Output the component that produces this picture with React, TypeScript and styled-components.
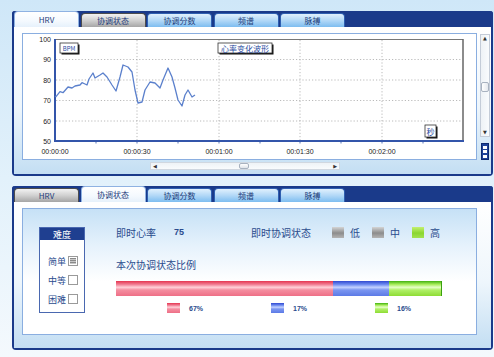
import React from "react";
import styled, { createGlobalStyle } from "styled-components";

const NAVY = "#1a3a8a";
const TEXT = "#2a4b8d";

const Global = createGlobalStyle`
  html, body { margin: 0; padding: 0; }
  body {
    width: 494px;
    height: 357px;
    overflow: hidden;
    background: linear-gradient(180deg, #cfe7f8 0%, #e2f1fb 50%, #f4f9fd 100%);
    font-family: "Noto Sans CJK SC", "Liberation Sans", sans-serif;
  }
`;

const Page = styled.div`
  display: flex;
  flex-direction: column;
  gap: 10px;
  padding: 11px 1px 0 12px;
`;

const Panel = styled.div`
  width: 481px;
  box-sizing: border-box;
  border: 2px solid ${NAVY};
  border-top: none;
  border-radius: 3px 3px 4px 4px;
  display: flex;
  flex-direction: column;
`;

const TabBar = styled.div`
  height: 16px;
  background: ${NAVY};
  display: flex;
  align-items: flex-end;
  gap: 1.5px;
  margin: 0 -2px;
  padding-left: 2px;
  border-radius: 3px 3px 0 0;
`;

type TabKind = "active" | "blue" | "gray";

const Tab = styled.div<{ $kind: TabKind }>`
  width: 65px;
  box-sizing: border-box;
  height: ${(p) => (p.$kind === "active" ? 16 : 14)}px;
  display: flex;
  align-items: center;
  justify-content: center;
  font-size: 8px;
  color: #1d3c7a;
  border-radius: 4px 4px 0 0;
  border: 1px solid
    ${(p) => (p.$kind === "active" ? "#8fb2e2" : p.$kind === "gray" ? "#4d4d4d" : "#2f5fb0")};
  border-bottom: none;
  background: ${(p) =>
    p.$kind === "active"
      ? "linear-gradient(180deg, #ffffff 0%, #f4f9fe 60%, #e6f1fb 100%)"
      : p.$kind === "gray"
      ? "linear-gradient(180deg, #f2f2f2 0%, #d0d0d0 50%, #a6a6a6 100%)"
      : "linear-gradient(180deg, #e0f0fd 0%, #b2d8f7 50%, #7dbdf0 100%)"};
`;

const TopBody = styled.div`
  display: grid;
  grid-template-columns: 455px 11px;
  grid-template-rows: 127px 8px;
  column-gap: 2px;
  row-gap: 2px;
  padding: 6px 0 4px 8px;
  background: linear-gradient(180deg, #ffffff 0%, #eef6fc 55%, #c3def3 100%);
`;

const BottomBody = styled.div`
  display: flex;
  padding: 6px 0 13px 8px;
  background: linear-gradient(180deg, #ffffff 0%, #eef6fc 55%, #c3def3 100%);
`;

const InnerBox = styled.div`
  box-sizing: border-box;
  height: 127px;
  width: 455px;
  flex: none;
  border: 1px solid #8aaee0;
  background: #ffffff;
`;

const StateBox = styled(InnerBox)`
  display: flex;
  align-items: flex-start;
  padding: 18px 0 0 16px;
  background: linear-gradient(180deg, #c6e1f6 0%, #e6f2fc 30%, #ffffff 58%);
`;

const ScrollCol = styled.div`
  display: flex;
  flex-direction: column;
  gap: 6px;
  padding-top: 1px;
`;

const VTrack = styled.div`
  margin-left: 1px;
  width: 10px;
  height: 103px;
  box-sizing: border-box;
  border: 1px solid #c4ccd8;
  background: linear-gradient(90deg, #eef2f6, #f9fbfd);
  display: flex;
  flex-direction: column;
  align-items: center;
`;

const Arrow = styled.span`
  font-size: 5px;
  line-height: 7px;
  height: 7px;
  color: #333;
  font-family: "DejaVu Sans", sans-serif;
`;

const VThumb = styled.div<{ $offset: number }>`
  margin-top: ${(p) => p.$offset}px;
  width: 8px;
  height: 10px;
  box-sizing: border-box;
  border: 1px solid #a8b2c0;
  border-radius: 2px;
  background: linear-gradient(90deg, #ffffff, #e4e8ee);
`;

const VSpacer = styled.div`
  flex: 1;
`;

const DotsButton = styled.div`
  margin-left: 2px;
  width: 8px;
  height: 17px;
  box-sizing: border-box;
  background: #1f4399;
  border: 1px solid #0e2a70;
  display: flex;
  flex-direction: column;
  align-items: center;
  justify-content: space-evenly;
`;

const Dot = styled.div`
  width: 4px;
  height: 3px;
  background: #ffffff;
`;

const HScrollRow = styled.div`
  padding-left: 128px;
`;

const HTrack = styled.div`
  width: 190px;
  height: 8px;
  box-sizing: border-box;
  border: 1px solid #d0d7e0;
  background: linear-gradient(180deg, #eef2f6, #f9fbfd);
  display: flex;
  align-items: center;
  padding: 0 2px;
`;

const HThumb = styled.div<{ $offset: number }>`
  margin-left: ${(p) => p.$offset}px;
  width: 10px;
  height: 6px;
  box-sizing: border-box;
  border: 1px solid #a8b2c0;
  border-radius: 2px;
  background: linear-gradient(180deg, #ffffff, #e0e4ea);
`;

const HArrow = styled.span`
  font-size: 5px;
  color: #333;
  font-family: "DejaVu Sans", sans-serif;
`;

/* ---------- Difficulty box ---------- */

const Difficulty = styled.div`
  flex: none;
  width: 46px;
  height: 86px;
  box-sizing: border-box;
  border: 1px solid #4a68b0;
  background: #ffffff;
  display: flex;
  flex-direction: column;
`;

const DiffHeader = styled.div`
  height: 12px;
  background: #1f3f90;
  color: #ffffff;
  font-size: 9px;
  display: flex;
  align-items: center;
  justify-content: center;
`;

const DiffList = styled.div`
  display: flex;
  flex-direction: column;
  gap: 7px;
  padding: 15px 6px 0 0;
  align-items: flex-end;
`;

const DiffItem = styled.div`
  display: flex;
  align-items: center;
  gap: 2px;
  height: 12px;
  font-size: 9px;
  color: ${TEXT};
`;

const Check = styled.div<{ $checked?: boolean }>`
  width: 10px;
  height: 10px;
  box-sizing: border-box;
  border: 1px solid #9a9a9a;
  background: #ffffff;
  display: flex;
  align-items: center;
  justify-content: center;
  &::after {
    content: "";
    display: ${(p) => (p.$checked ? "block" : "none")};
    width: 6px;
    height: 6px;
    background: repeating-linear-gradient(180deg, #8a8a8a 0 1px, #c8c8c8 1px 2px);
  }
`;

/* ---------- Main state column ---------- */

const Main = styled.div`
  flex: none;
  margin-left: 31px;
  display: flex;
  flex-direction: column;
`;

const Row = styled.div`
  display: flex;
  align-items: center;
  height: 10px;
  font-size: 10px;
  color: ${TEXT};
  white-space: nowrap;
`;

const Cell = styled.span<{ $w: number }>`
  width: ${(p) => p.$w}px;
  flex: none;
`;

const Value = styled.span`
  width: 77px;
  flex: none;
  font-family: "Liberation Sans", sans-serif;
  font-size: 9px;
  font-weight: bold;
`;

const StateItem = styled.div`
  display: flex;
  align-items: center;
  gap: 6px;
  width: 40px;
  flex: none;
`;

type Tone = "gray" | "green" | "red" | "blue";

const toneBg: Record<Tone, string> = {
  gray: "linear-gradient(180deg, #d4d4d4 0%, #8c8c8c 55%, #b4b4b4 100%)",
  green: "linear-gradient(180deg, #c4f070 0%, #8ad630 55%, #a2e250 100%)",
  red: "linear-gradient(180deg, #e5344f 0%, #f07a90 22%, #ffd0d8 42%, #f48ea0 60%, #ee6f86 100%)",
  blue: "linear-gradient(180deg, #3048d0 0%, #6a88ee 22%, #c4d2ff 42%, #7b96f0 60%, #5c7ae6 100%)",
};

const greenBar =
  "linear-gradient(180deg, #40b010 0%, #a6ec58 22%, #e6ffc8 42%, #b0f068 60%, #8edc34 100%)";

const Swatch = styled.div<{ $tone: Tone }>`
  width: 12px;
  height: 11px;
  flex: none;
  background: ${(p) => toneBg[p.$tone]};
`;

const SectionTitle = styled(Row)`
  margin-top: 22px;
`;

const Bar = styled.div`
  margin-top: 12px;
  width: 326px;
  height: 15px;
  display: flex;
  box-sizing: border-box;
`;

const Segment = styled.div<{ $tone: "red" | "blue" | "green" }>`
  height: 100%;
  background: ${(p) => (p.$tone === "green" ? greenBar : toneBg[p.$tone])};
  border-right: ${(p) => (p.$tone === "green" ? "1px solid #3aa010" : "none")};
  box-sizing: border-box;
`;

const Legend = styled.div`
  margin-top: 7px;
  padding-left: 51px;
  display: flex;
`;

const LegendItem = styled.div`
  width: 104px;
  display: flex;
  align-items: center;
  gap: 9px;
`;

const LegendSwatch = styled.div<{ $tone: Tone }>`
  width: 13px;
  height: 10px;
  background: ${(p) => (p.$tone === "green" ? greenBar : toneBg[p.$tone])};
`;

const Pct = styled.span`
  font-family: "Liberation Sans", sans-serif;
  font-size: 7px;
  font-weight: bold;
  color: ${TEXT};
`;

/* ---------- Chart ---------- */

const hrv: [number, number][] = [
  [55, 96], [56, 96.7], [60, 91.7], [63, 92.7], [68, 87], [72, 88], [75, 86], [80, 85],
  [82, 82.7], [85, 84], [87, 85], [89, 79], [93, 73], [95, 78], [100, 75], [103, 73],
  [107, 77], [112, 85], [116, 91], [120, 77], [123, 65], [128, 67], [132, 72], [135, 90],
  [138, 103], [142, 102], [145, 90], [150, 82], [155, 83], [160, 88], [163, 80], [168, 68],
  [172, 77], [175, 88], [178, 100], [182, 106], [185, 95], [188, 90], [192, 97], [195, 95],
];

const yTicks = [
  { v: "100", y: 39.5 },
  { v: "90", y: 59.5 },
  { v: "80", y: 80 },
  { v: "70", y: 100.5 },
  { v: "60", y: 121 },
  { v: "50", y: 141 },
];
const xTicks = [
  { t: "00:00:00", x: 55 },
  { t: "00:00:30", x: 137 },
  { t: "00:01:00", x: 219 },
  { t: "00:01:30", x: 300 },
  { t: "00:02:00", x: 382 },
];

const LabelBox: React.FC<{ x: number; y: number; w: number; h: number; text: string; size: number }> = ({
  x, y, w, h, text, size,
}) => (
  <g>
    <rect x={x + 1.5} y={y + 1.5} width={w} height={h} fill="#111" />
    <rect x={x} y={y} width={w} height={h} fill="#fff" stroke="#333" strokeWidth={0.8} />
    <text
      x={x + w / 2}
      y={y + h / 2 + 0.5}
      textAnchor="middle"
      dominantBaseline="central"
      fontSize={size}
      fill="#2a4ba0"
      fontFamily='"Noto Sans CJK SC", "Liberation Sans", sans-serif'
    >
      {text}
    </text>
  </g>
);

const Chart: React.FC = () => (
  <svg width={453} height={125} viewBox="23 34 453 125" style={{ display: "block" }}>
    {[59.5, 80, 100.5, 121].map((y) => (
      <line key={y} x1={56} x2={462} y1={y} y2={y} stroke="#a8a8a8" strokeWidth={0.8} strokeDasharray="1.2 2" />
    ))}
    {[137, 219, 300, 382].map((x) => (
      <line key={x} x1={x} x2={x} y1={40} y2={140} stroke="#a8a8a8" strokeWidth={0.8} strokeDasharray="1.2 2" />
    ))}
    <line x1={55} x2={463} y1={39.5} y2={39.5} stroke="#777" strokeWidth={1} />
    <line x1={463} x2={463} y1={39} y2={141} stroke="#666" strokeWidth={1.5} />
    {[96, 137, 178, 219, 260, 300, 341, 382, 423].map((x) => (
      <line key={x} x1={x} x2={x} y1={141} y2={143.5} stroke="#3355aa" strokeWidth={0.8} />
    ))}
    <line x1={55} x2={55} y1={39} y2={142} stroke="#3355aa" strokeWidth={2} />
    <line x1={54} x2={464} y1={141} y2={141} stroke="#3355aa" strokeWidth={2} />
    {yTicks.map((t) => (
      <text
        key={t.v}
        x={51}
        y={t.y}
        textAnchor="end"
        dominantBaseline="central"
        fontSize={7}
        fill="#222"
        fontFamily='"Liberation Sans", sans-serif'
      >
        {t.v}
      </text>
    ))}
    {xTicks.map((t) => (
      <text
        key={t.t}
        x={t.x}
        y={151.5}
        textAnchor="middle"
        dominantBaseline="central"
        fontSize={7}
        fill="#222"
        fontFamily='"Liberation Sans", sans-serif'
      >
        {t.t}
      </text>
    ))}
    <polyline
      points={hrv.map((p) => p.join(",")).join(" ")}
      fill="none"
      stroke="#5b80cc"
      strokeWidth={1.3}
      strokeLinejoin="round"
    />
    <LabelBox x={60} y={43} w={18} h={10} text="BPM" size={6} />
    <LabelBox x={218} y={43} w={54} h={10} text="心率变化波形" size={8} />
    <LabelBox x={425} y={125} w={11} h={12} text="秒" size={8} />
  </svg>
);

const tabs = ["HRV", "协调状态", "协调分数", "频谱", "脉搏"];

const Tabs: React.FC<{ active: number; gray: number }> = ({ active, gray }) => (
  <TabBar>
    {tabs.map((t, i) => (
      <Tab key={t} $kind={i === active ? "active" : i === gray ? "gray" : "blue"}>
        {t}
      </Tab>
    ))}
  </TabBar>
);

const ratio = [
  { tone: "red" as const, pct: 66.6, label: "67%" },
  { tone: "blue" as const, pct: 17.2, label: "17%" },
  { tone: "green" as const, pct: 16.2, label: "16%" },
];

export default function App() {
  return (
    <>
      <Global />
      <Page>
        <Panel>
          <Tabs active={0} gray={1} />
          <TopBody>
            <InnerBox>
              <Chart />
            </InnerBox>
            <ScrollCol>
              <VTrack>
                <Arrow>▲</Arrow>
                <VThumb $offset={40} />
                <VSpacer />
                <Arrow>▼</Arrow>
              </VTrack>
              <DotsButton>
                <Dot />
                <Dot />
                <Dot />
              </DotsButton>
            </ScrollCol>
            <HScrollRow>
              <HTrack>
                <HArrow>◀</HArrow>
                <HThumb $offset={82} />
                <VSpacer />
                <HArrow>▶</HArrow>
              </HTrack>
            </HScrollRow>
          </TopBody>
        </Panel>

        <Panel>
          <Tabs active={1} gray={0} />
          <BottomBody>
            <StateBox>
              <Difficulty>
                <DiffHeader>难度</DiffHeader>
                <DiffList>
                  <DiffItem>
                    简单 <Check $checked />
                  </DiffItem>
                  <DiffItem>
                    中等 <Check />
                  </DiffItem>
                  <DiffItem>
                    困难 <Check />
                  </DiffItem>
                </DiffList>
              </Difficulty>
              <Main>
                <Row>
                  <Cell $w={58}>即时心率</Cell>
                  <Value>75</Value>
                  <Cell $w={81}>即时协调状态</Cell>
                  <StateItem>
                    <Swatch $tone="gray" />低
                  </StateItem>
                  <StateItem>
                    <Swatch $tone="gray" />中
                  </StateItem>
                  <StateItem>
                    <Swatch $tone="green" />高
                  </StateItem>
                </Row>
                <SectionTitle>本次协调状态比例</SectionTitle>
                <Bar>
                  {ratio.map((r) => (
                    <Segment key={r.tone} $tone={r.tone} style={{ width: `${r.pct}%` }} />
                  ))}
                </Bar>
                <Legend>
                  {ratio.map((r) => (
                    <LegendItem key={r.tone}>
                      <LegendSwatch $tone={r.tone} />
                      <Pct>{r.label}</Pct>
                    </LegendItem>
                  ))}
                </Legend>
              </Main>
            </StateBox>
          </BottomBody>
        </Panel>
      </Page>
    </>
  );
}
